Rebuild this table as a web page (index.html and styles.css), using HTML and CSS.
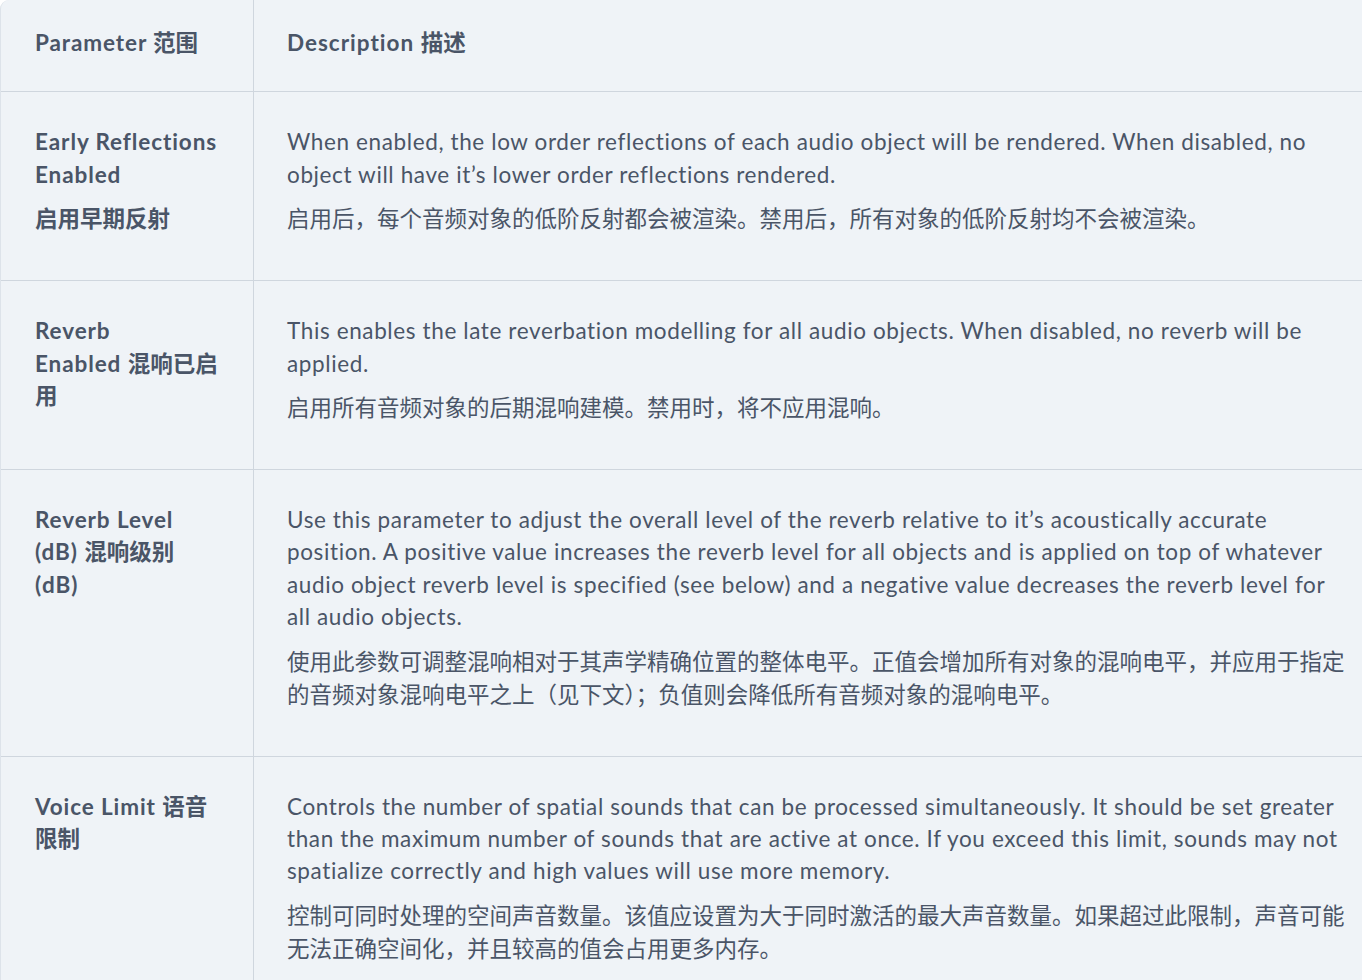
FILE: index.html
```html
<!DOCTYPE html>
<html lang="zh-CN">
<head>
<meta charset="utf-8">
<title>Spatial Audio Parameters</title>
<link rel="stylesheet" href="styles.css">
</head>
<body>
<div class="wrap">
<table class="params">
  <thead>
    <tr>
      <th class="col-name">Parameter&nbsp;<span class="zh">范围</span></th>
      <th class="col-desc">Description&nbsp;<span class="zh">描述</span></th>
    </tr>
  </thead>
  <tbody>
    <tr>
      <td class="col-name">
        <p>Early Reflections<br>Enabled</p>
        <p class="zh">启用早期反射</p>
      </td>
      <td class="col-desc">
        <p>When enabled, the low order reflections of each audio object will be rendered. When disabled, no<br>object will have it’s lower order reflections rendered.</p>
        <p class="zh">启用后，每个音频对象的低阶反射都会被渲染。禁用后，所有对象的低阶反射均不会被渲染。</p>
      </td>
    </tr>
    <tr>
      <td class="col-name">
        <p>Reverb<br>Enabled&nbsp;<span class="zh">混响已启<br>用</span></p>
      </td>
      <td class="col-desc">
        <p>This enables the late reverbation modelling for all audio objects. When disabled, no reverb will be<br>applied.</p>
        <p class="zh">启用所有音频对象的后期混响建模。禁用时，将不应用混响。</p>
      </td>
    </tr>
    <tr>
      <td class="col-name">
        <p>Reverb Level<br>(dB)&nbsp;<span class="zh">混响级别</span><br>(dB)</p>
      </td>
      <td class="col-desc">
        <p>Use this parameter to adjust the overall level of the reverb relative to it’s acoustically accurate<br>position. A positive value increases the reverb level for all objects and is applied on top of whatever<br>audio object reverb level is specified (see below) and a negative value decreases the reverb level for<br>all audio objects.</p>
        <p class="zh">使用此参数可调整混响相对于其声学精确位置的整体电平。正值会增加所有对象的混响电平，并应用于指定<br>的音频对象混响电平之上（见下文）；负值则会降低所有音频对象的混响电平。</p>
      </td>
    </tr>
    <tr>
      <td class="col-name">
        <p>Voice Limit&nbsp;<span class="zh">语音<br>限制</span></p>
      </td>
      <td class="col-desc">
        <p>Controls the number of spatial sounds that can be processed simultaneously. It should be set greater<br>than the maximum number of sounds that are active at once. If you exceed this limit, sounds may not<br>spatialize correctly and high values will use more memory.</p>
        <p class="zh">控制可同时处理的空间声音数量。该值应设置为大于同时激活的最大声音数量。如果超过此限制，声音可能<br>无法正确空间化，并且较高的值会占用更多内存。</p>
      </td>
    </tr>
  </tbody>
</table>
</div>
</body>
</html>
```

FILE: styles.css
```css
html, body {
  margin: 0;
  padding: 0;
  background: #ffffff;
}

body {
  font-family: "Lato", "Noto Sans CJK SC", sans-serif;
  color: #4a5567;
  font-size: 22.5px;
  line-height: 32.4px;
}

.wrap {
  width: 1362px;
  height: 980px;
  overflow: hidden;
}

.params {
  width: 1380px;
  border-collapse: separate;
  border-spacing: 0;
  background: #eff3f7;
  border-left: 1px solid #dde3ea;
  border-top-left-radius: 9px;
  table-layout: fixed;
}

.params th,
.params td {
  text-align: left;
  vertical-align: top;
  padding: 34px 20px 34px 34px;
  border-bottom: 1px solid #cfd6de;
  letter-spacing: 0.62px;
}

.params th {
  font-weight: 700;
  padding-top: 27px;
  padding-bottom: 32px;
  letter-spacing: 1px;
}

.params .col-name {
  width: 184px;
  padding-right: 34px;
  border-right: 1px solid #cfd6de;
  font-weight: 700;
  letter-spacing: 0.9px;
}

.params .col-desc {
  padding-left: 33px;
  white-space: nowrap;
}

.params p {
  margin: 0 0 11px 0;
}

.params .zh {
  letter-spacing: 0;
}

.params p.zh {
  line-height: 33px;
}
```
